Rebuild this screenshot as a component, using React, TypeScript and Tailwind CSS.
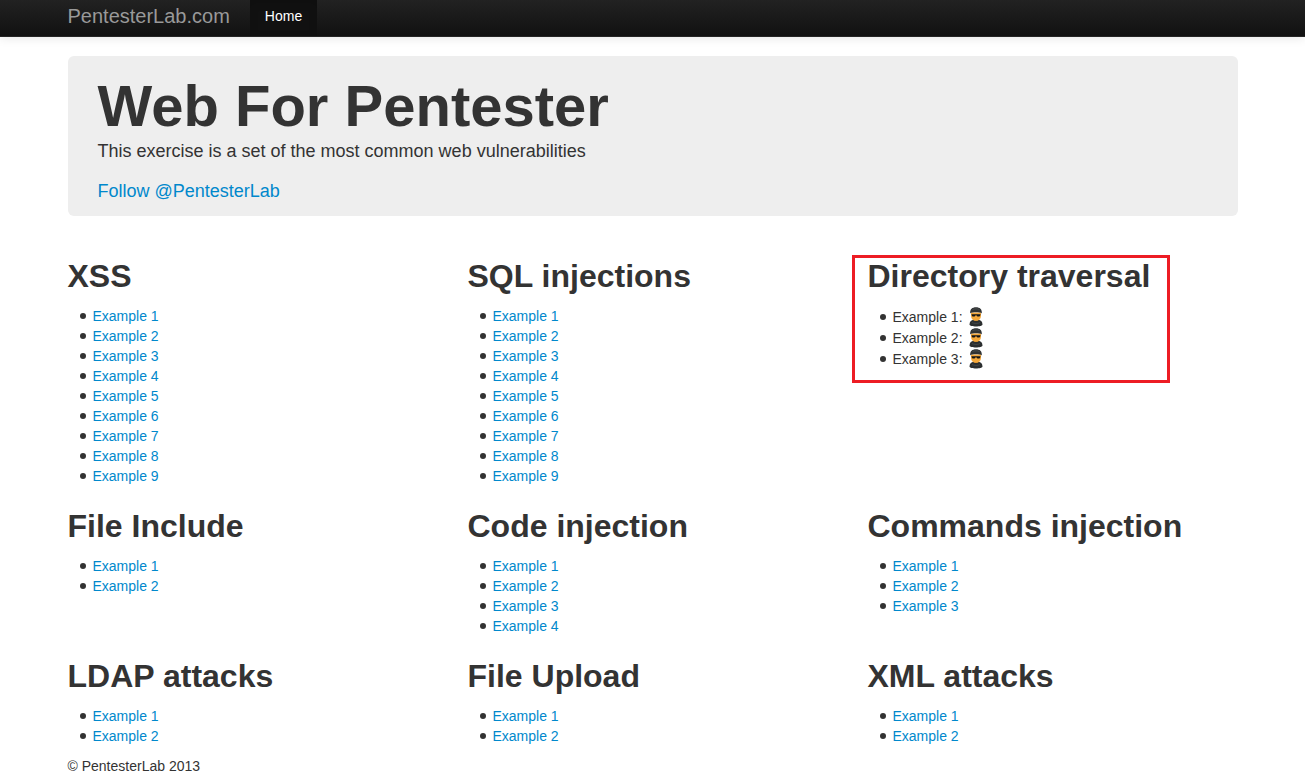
import React from 'react';

interface Section {
  title: string;
  count: number;
  blocked?: boolean;
}

const rows: Section[][] = [
  [
    { title: 'XSS', count: 9 },
    { title: 'SQL injections', count: 9 },
    { title: 'Directory traversal', count: 3, blocked: true },
  ],
  [
    { title: 'File Include', count: 2 },
    { title: 'Code injection', count: 4 },
    { title: 'Commands injection', count: 3 },
  ],
  [
    { title: 'LDAP attacks', count: 2 },
    { title: 'File Upload', count: 2 },
    { title: 'XML attacks', count: 2 },
  ],
];

const HackerIcon: React.FC = () => (
  <svg className="h-5 w-4 shrink-0" viewBox="0 0 16 20" aria-hidden="true">
    <path d="M6 11h4v3.500H6Z" fill="#d98a1c" />
    <path d="M1.500 17.500C1.500 14.500 3.500 13 5.500 12.800c1 1.200 4 1.200 5 0 2 .2 4 1.700 4 4.700 0 2.600-13 2.600-13 0Z" fill="#2b2e2f" />
    <path d="M4 15.500c1.500 1.200 6.500 1.200 8 0" fill="none" stroke="#4c5051" strokeWidth="0.700" />
    <path d="M3 5.500h10v3.200c0 3-2.200 5-5 5s-5-2-5-5Z" fill="#f5a83a" />
    <path d="M2.200 6.400C1.800 2.300 4.200.3 8 .3s6.200 2 5.800 6.100C12 5 4 5 2.200 6.400Z" fill="#303334" />
    <path d="M4.500 2.600c1.800-1 5.200-1 7 0" fill="none" stroke="#505455" strokeWidth="0.700" />
    <path d="M3.500 7.200h9v.6c-.3 1.300-.9 1.800-2 1.800-1.200 0-1.900-.5-2.100-1.400h-.8c-.2.900-.9 1.400-2.100 1.400-1.100 0-1.700-.5-2-1.800Z" fill="#151515" />
  </svg>
);

const ExampleList: React.FC<{ section: Section }> = ({ section }) => {
  const items = Array.from({ length: section.count }, (_, i) => i + 1);

  return (
    <ul className="mb-2.5 ml-3">
      {items.map(n => (
        <li key={n} className="flex items-center gap-[7px] before:size-1.5 before:rounded-full before:bg-[#333333]">
          {section.blocked ? (
            <span className="flex h-[21px] items-center gap-[5px]">
              Example {n}: <HackerIcon />
            </span>
          ) : (
            <a href="#" className="text-[#0088cc] hover:underline">Example {n}</a>
          )}
        </li>
      ))}
    </ul>
  );
};

const App: React.FC = () => {
  return (
    <div className="min-h-screen bg-white font-['Liberation_Sans',Arial,sans-serif] text-sm leading-5 text-[#333333]">
      <nav className="border-b border-[#252525] bg-linear-to-b from-[#222222] to-[#111111] shadow-[0_1px_10px_rgba(0,0,0,0.1)]">
        <div className="mx-auto flex max-w-[1170px] gap-5">
          <a href="#" className="pt-1.5 pb-2.5 text-xl leading-5 text-[#999999]">PentesterLab.com</a>
          <a href="#" className="bg-[#111111] px-[15px] pt-1.5 pb-2.5 text-white shadow-[inset_0_3px_8px_rgba(0,0,0,0.125)]">Home</a>
        </div>
      </nav>

      <main className="mx-auto max-w-[1170px]">
        <header className="mt-[19px] mb-[30px] rounded-md bg-[#eeeeee] px-[30px] pt-5 pb-2.5 text-lg leading-[30px]">
          <h1 className="text-[58px] leading-[60px] font-bold">Web For Pentester</h1>
          <p className="mb-2.5">This exercise is a set of the most common web vulnerabilities</p>
          <a href="#" className="text-[#0088cc] hover:underline">Follow @PentesterLab</a>
        </header>

        {rows.map((row, i) => (
          <div key={i} className="grid grid-cols-3 gap-[30px]">
            {row.map(section => (
              <section key={section.title} className="relative pt-2.5">
                <h2 className="mb-2.5 text-[32px] leading-10 font-bold">{section.title}</h2>
                <ExampleList section={section} />
                {section.blocked && (
                  <div className="pointer-events-none absolute top-[9px] -left-4 h-32 w-[318px] border-3 border-[#ed1c24]" />
                )}
              </section>
            ))}
          </div>
        ))}

        <footer>
          <p>© PentesterLab 2013</p>
        </footer>
      </main>
    </div>
  );
};

export default App;
